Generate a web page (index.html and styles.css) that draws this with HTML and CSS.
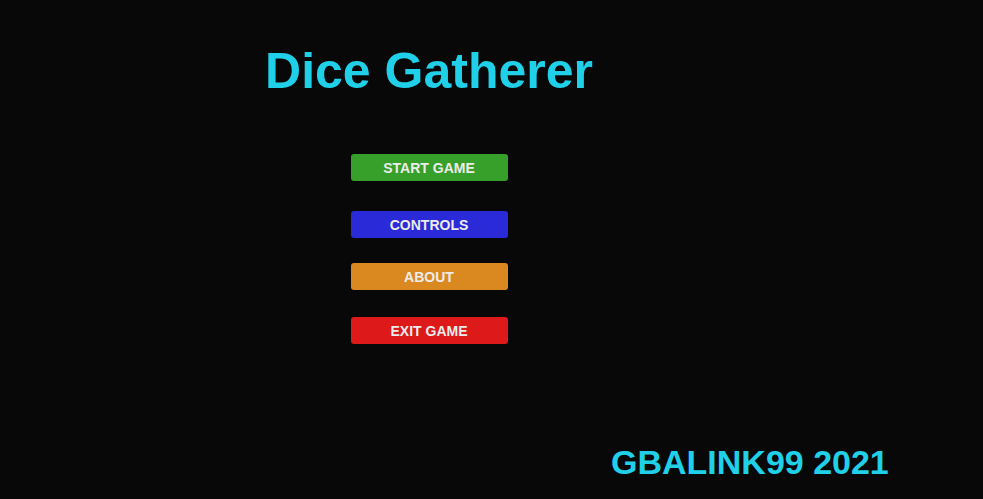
FILE: index.html
```html
<!DOCTYPE html>
<html>
<head>
<meta charset="utf-8">
<link rel="stylesheet" href="styles.css">
</head>
<body>
<div class="page">
  <main class="menu">
    <h1 class="title">Dice Gatherer</h1>
    <nav class="buttons">
      <button class="btn btn-start">START GAME</button>
      <button class="btn btn-controls">CONTROLS</button>
      <button class="btn btn-about">ABOUT</button>
      <button class="btn btn-exit">EXIT GAME</button>
    </nav>
  </main>
  <footer class="credit">GBALINK99 2021</footer>
</div>
</body>
</html>
```
FILE: styles.css
```css
html, body {
  margin: 0;
  padding: 0;
  background: #080808;
  height: 100%;
}
.page {
  width: 983px;
  height: 499px;
  display: flex;
  flex-direction: column;
  font-family: "Liberation Sans", Arial, sans-serif;
}
.menu {
  width: 858px;
  display: flex;
  flex-direction: column;
  align-items: center;
}
.title {
  margin: 41px 0 0 0;
  font-size: 50px;
  line-height: 60px;
  font-weight: bold;
  color: #1fd0e8;
}
.buttons {
  margin-top: 53px;
  display: flex;
  flex-direction: column;
  align-items: center;
}
.btn {
  width: 157px;
  height: 27px;
  border: none;
  border-radius: 3px;
  font-family: "Liberation Sans", Arial, sans-serif;
  font-size: 14px;
  font-weight: bold;
  color: #ececec;
  padding: 0;
}
.btn-start { background: #37a02a; }
.btn-controls { background: #2a2ad9; margin-top: 30px; }
.btn-about { background: #da8820; margin-top: 25px; }
.btn-exit { background: #dd1919; margin-top: 27px; }
.credit {
  margin-top: auto;
  margin-bottom: 17px;
  padding-left: 611px;
  font-size: 34px;
  line-height: 40px;
  font-weight: bold;
  color: #1fd0e8;
}
```
